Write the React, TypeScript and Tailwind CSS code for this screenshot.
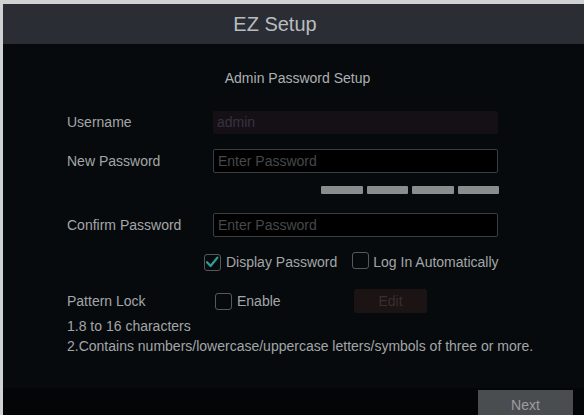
import { useState } from 'react'

function Box({ checked, onClick }: { checked: boolean; onClick: () => void }) {
  return (
    <button
      type="button"
      onClick={onClick}
      className="relative size-[17px] shrink-0 rounded-[3px] border-[1.5px] border-[#55595c] bg-transparent"
    >
      {checked && (
        <svg viewBox="0 0 16 16" className="absolute -left-[1px] -top-[1px] size-[16px]">
          <path d="M3 8.2 L6.6 12 L13.4 3.6" fill="none" stroke="#2e9f98" strokeWidth="2.2" strokeLinecap="round" strokeLinejoin="round" />
        </svg>
      )}
    </button>
  )
}

export default function App() {
  const [showPw, setShowPw] = useState(true)
  const [autoLogin, setAutoLogin] = useState(false)
  const [pattern, setPattern] = useState(false)

  return (
    <div
      className="flex h-[415px] w-[584px] flex-col overflow-hidden border-l-[3px] border-t-[4px] border-[#cfd1d3] bg-[#060a0c] text-[14px] text-[#a3a6a8]"
      style={{ fontFamily: '"Liberation Sans", Arial, sans-serif' }}
    >
      {/* Header */}
      <div className="flex h-[40px] shrink-0 items-center justify-center bg-[#2a2d33] pr-[37px] text-[20px] text-[#b9bcbf]">
        EZ Setup
      </div>

      {/* Body */}
      <div className="flex flex-1 flex-col pl-[64px]">
        <div className="mt-[27px] -ml-[64px] h-[14px] pl-[64px] pr-[56px] text-center leading-[14px] text-[#adb0b2]">
          Admin Password Setup
        </div>

        <div className="mt-[26px] flex h-[23px] items-center">
          <span className="w-[146px]">Username</span>
          <div className="flex h-[23px] w-[285px] items-center rounded-[2px] bg-[#141016] px-[4px] text-[#393240]">admin</div>
        </div>

        <div className="mt-[15px] flex h-[24px] items-center">
          <span className="w-[146px]">New Password</span>
          <input
            placeholder="Enter Password"
            className="h-[24px] w-[285px] rounded-[2px] border border-[#3a3e41] bg-black px-[4px] text-[#a6a9ab] outline-none placeholder:text-[#45494c]"
          />
        </div>

        <div className="mt-[13px] ml-[254px] flex h-[8px] w-[178px] gap-[4px]">
          <div className="flex-1 rounded-[1px] bg-[#8a8d8e]" />
          <div className="flex-1 rounded-[1px] bg-[#8a8d8e]" />
          <div className="flex-1 rounded-[1px] bg-[#8a8d8e]" />
          <div className="flex-1 rounded-[1px] bg-[#8a8d8e]" />
        </div>

        <div className="mt-[19px] flex h-[24px] items-center">
          <span className="w-[146px]">Confirm Password</span>
          <input
            placeholder="Enter Password"
            className="h-[24px] w-[285px] rounded-[2px] border border-[#3a3e41] bg-black px-[4px] text-[#a6a9ab] outline-none placeholder:text-[#45494c]"
          />
        </div>

        <div className="mt-[17px] ml-[137px] flex h-[17px] items-center">
          <Box checked={showPw} onClick={() => setShowPw(!showPw)} />
          <span className="ml-[5px]">Display Password</span>
          <div className="ml-[15px]">
            <Box checked={autoLogin} onClick={() => setAutoLogin(!autoLogin)} />
          </div>
          <span className="ml-[4px]">Log In Automatically</span>
        </div>

        <div className="mt-[18px] flex h-[24px] items-center">
          <span className="w-[148px]">Pattern Lock</span>
          <Box checked={pattern} onClick={() => setPattern(!pattern)} />
          <span className="ml-[5px] w-[117px]">Enable</span>
          <button type="button" className="h-[24px] w-[73px] rounded-[2px] bg-[#1b1314] text-[#383030]">
            Edit
          </button>
        </div>

        <div className="mt-[3px] leading-[20px]">1.8 to 16 characters</div>
        <div className="leading-[20px]">2.Contains numbers/lowercase/uppercase letters/symbols of three or more.</div>
      </div>

      {/* Footer */}
      <div className="flex h-[27px] shrink-0 justify-end bg-[#030506] pr-[11px] pt-[2px]">
        <button type="button" className="h-[30px] w-[95px] bg-[#4a4d4f] text-[#9a9d9f]">
          Next
        </button>
      </div>
    </div>
  )
}
